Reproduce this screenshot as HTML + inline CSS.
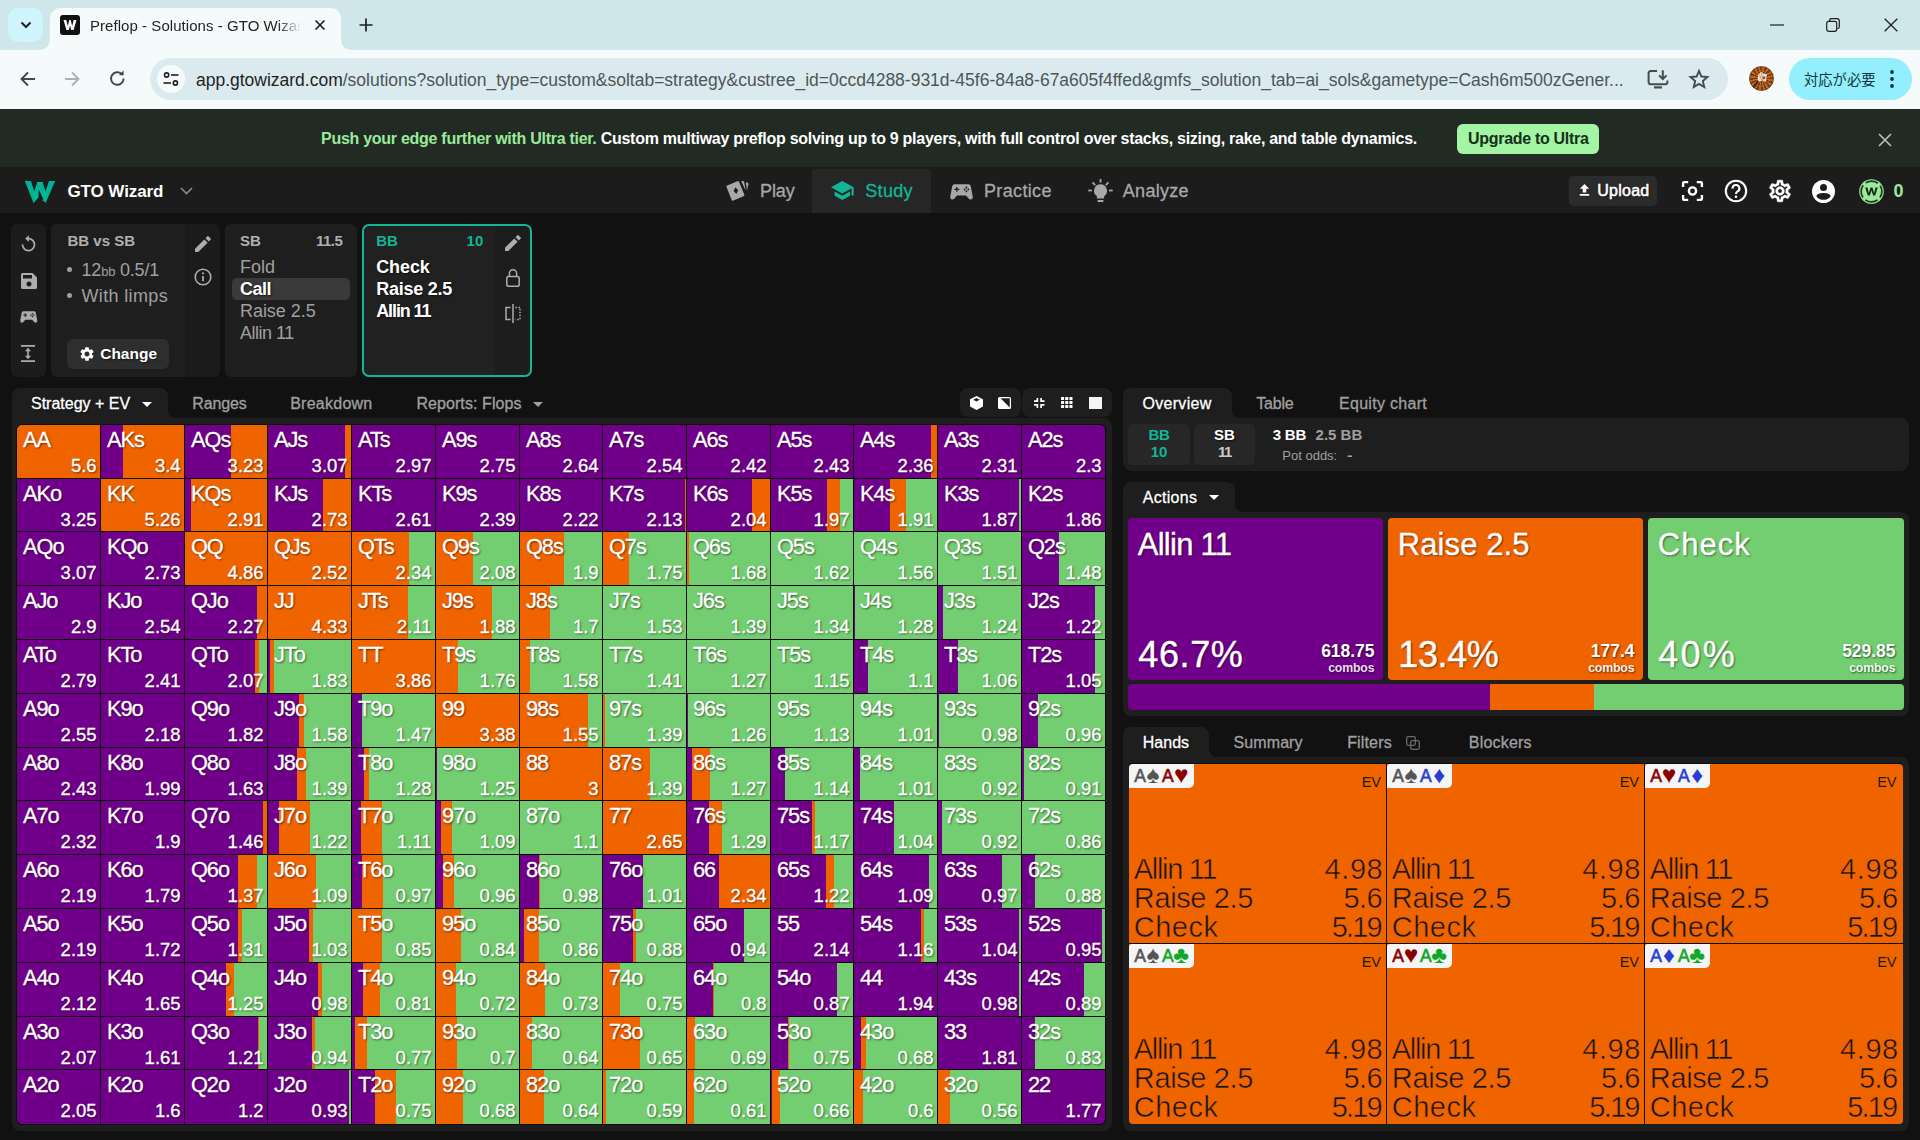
<!DOCTYPE html>
<html lang="en"><head><meta charset="utf-8"><title>Preflop - Solutions - GTO Wizard</title>
<style>

*{box-sizing:border-box;margin:0;padding:0}
html,body{width:1920px;height:1140px;overflow:hidden;background:#111;font-family:"Liberation Sans","Noto Sans CJK JP",sans-serif;color:#fff}
body{position:relative}
.abs{position:absolute}
.t{position:absolute;white-space:nowrap;line-height:1}
svg{position:absolute;overflow:visible}
/* matrix */
#mxbg{position:absolute;left:16px;top:424px;width:1090px;height:701px;background:#0a0a0a;border-radius:6px}
.c{position:absolute;color:#fff;text-shadow:1px 1px 2px rgba(0,0,0,.6);overflow:hidden;-webkit-text-stroke:.3px #fff}
.c b{position:absolute;left:5.900px;font-weight:400;font-size:21.800px;line-height:1;white-space:nowrap;letter-spacing:-1px}
.c i{position:absolute;right:3.400px;font-style:normal;font-size:18.500px;line-height:1;white-space:nowrap}
.c b{top:4px}
.c i{top:32px}

.hc{position:absolute;background:#f06400;color:#161616;overflow:hidden}
.tag{position:absolute;left:0;top:0;width:65px;height:24px;background:#f5f5f5;border-radius:3px 0 5px 0;white-space:nowrap}
.tag .a{position:absolute;top:4px;font-size:17.500px;line-height:1;-webkit-text-stroke:.6px currentColor}
.tag .s{position:absolute;top:0px;width:20px;text-align:center;font-size:23.500px;line-height:1}
.ev{position:absolute;right:5px;top:11px;font-size:14.500px;line-height:1;color:#1c1c1c}
.hl{position:absolute;font-size:29px;line-height:1;white-space:nowrap;-webkit-text-stroke:.5px #f06400}

</style></head>
<body>
<div class="abs" style="left:0;top:0;width:1920px;height:50px;background:#cfe7eb"></div>
<div class="abs" style="left:0;top:50px;width:1920px;height:59px;background:#f5fafb"></div>
<div class="abs" style="left:8px;top:8px;width:35px;height:34px;border-radius:10px;background:#cff4fc"></div>
<svg style="left:20px;top:20px" width="12" height="10" viewBox="0 0 12 10"><path d="M1.5 2.5 L6 7 L10.5 2.5" fill="none" stroke="#1f1f1f" stroke-width="2"/></svg>
<div class="abs" style="left:50px;top:8px;width:291px;height:42px;border-radius:10px 10px 0 0;background:#f5fafb"></div>
<svg style="left:40px;top:40px" width="10" height="10" viewBox="0 0 10 10"><path d="M0 10 H10 V0 A10 10 0 0 1 0 10Z" fill="#f5fafb"/></svg>
<svg style="left:341px;top:40px" width="10" height="10" viewBox="0 0 10 10"><path d="M10 10 H0 V0 A10 10 0 0 0 10 10Z" fill="#f5fafb"/></svg>
<div class="abs" style="left:60px;top:15px;width:20px;height:20px;border-radius:3px;background:#111"></div>
<svg style="left:63px;top:19px" width="14" height="12" viewBox="0 0 14 12"><path d="M0.5 1 H3.3 L4.8 7 L6.3 1 H7.7 L9.2 7 L10.7 1 H13.5 L10.6 11 H8.2 L7 6.6 L5.8 11 H3.4Z" fill="#fff"/></svg>
<div class="t" style="left:90px;top:15.500px;font-size:15px;line-height:20px;color:#1f1f1f;width:212px;overflow:hidden;letter-spacing:.05px;-webkit-mask-image:linear-gradient(90deg,#000 0,#000 188px,transparent 211px);mask-image:linear-gradient(90deg,#000 0,#000 188px,transparent 211px)">Preflop - Solutions - GTO Wizar</div>
<svg style="left:314px;top:19px" width="12" height="12" viewBox="0 0 12 12"><path d="M1.5 1.5 L10.5 10.5 M10.5 1.5 L1.5 10.5" stroke="#1f1f1f" stroke-width="1.7" fill="none"/></svg>
<svg style="left:359px;top:18px" width="14" height="14" viewBox="0 0 14 14"><path d="M7 0.5 V13.5 M0.5 7 H13.5" stroke="#1f1f1f" stroke-width="1.7" fill="none"/></svg>
<svg style="left:1770px;top:24px" width="14" height="2" viewBox="0 0 14 2"><path d="M0 1 H14" stroke="#1f1f1f" stroke-width="1.2"/></svg>
<svg style="left:1826px;top:18px" width="14" height="14" viewBox="0 0 14 14"><rect x="0.7" y="3.3" width="10" height="10" rx="2" fill="none" stroke="#1f1f1f" stroke-width="1.2"/><path d="M3.5 3 V2.5 A1.8 1.8 0 0 1 5.3 0.7 H11 A2.3 2.3 0 0 1 13.3 3 V8.7 A1.8 1.8 0 0 1 11.5 10.5 H11" fill="none" stroke="#1f1f1f" stroke-width="1.2"/></svg>
<svg style="left:1884px;top:18px" width="14" height="14" viewBox="0 0 14 14"><path d="M0.7 0.7 L13.3 13.3 M13.3 0.7 L0.7 13.3" stroke="#1f1f1f" stroke-width="1.3" fill="none"/></svg>
<svg style="left:20px;top:71px" width="16" height="16" viewBox="0 0 16 16"><path d="M15 8 H2 M8 1.5 L1.5 8 L8 14.5" stroke="#3c4a4d" stroke-width="1.9" fill="none"/></svg>
<svg style="left:64px;top:71px" width="16" height="16" viewBox="0 0 16 16"><path d="M1 8 H14 M8 1.5 L14.5 8 L8 14.5" stroke="#a9b3b5" stroke-width="1.9" fill="none"/></svg>
<svg style="left:109px;top:70px" width="17" height="17" viewBox="0 0 17 17"><path d="M14.6 8.5 A6.3 6.3 0 1 1 12.6 3.9" stroke="#3c4a4d" stroke-width="1.9" fill="none"/><path d="M9.8 5.2 H14.6 V0.6 Z" fill="#3c4a4d"/></svg>
<div class="abs" style="left:150px;top:58px;width:1578px;height:42px;border-radius:21px;background:#dbeaee"></div>
<div class="abs" style="left:157px;top:65px;width:28px;height:28px;border-radius:14px;background:#f5fafb"></div>
<svg style="left:163px;top:72px" width="16" height="14" viewBox="0 0 16 14"><circle cx="3.6" cy="3" r="2.1" fill="none" stroke="#1f1f1f" stroke-width="1.6"/><path d="M8 3 H15.5" stroke="#1f1f1f" stroke-width="1.6"/><circle cx="12.4" cy="11" r="2.1" fill="none" stroke="#1f1f1f" stroke-width="1.6"/><path d="M0.5 11 H8" stroke="#1f1f1f" stroke-width="1.6"/></svg>
<div class="t" style="left:196px;top:68px;font-size:17.500px;line-height:24px;color:#4d5659;letter-spacing:-.01px" id="url"><span style="color:#1f1f1f">app.gtowizard.com</span>/solutions?solution_type=custom&amp;soltab=strategy&amp;custree_id=0ccd4288-931d-45f6-84a8-67a605f4ffed&amp;gmfs_solution_tab=ai_sols&amp;gametype=Cash6m500zGener...</div>
<svg style="left:1647px;top:69px" width="22" height="20" viewBox="0 0 22 20"><path d="M10 2.100 H3.600 A2 2 0 0 0 1.600 4.100 V13.300 A2 2 0 0 0 3.600 15.300 H18.400 A2 2 0 0 0 20.400 13.300 V11.600" fill="none" stroke="#474b4d" stroke-width="2"/><path d="M7 18.400 H15" stroke="#474b4d" stroke-width="2.200"/><path d="M15.800 1.200 V9.800 M12.100 6.400 L15.800 10.100 L19.500 6.400" fill="none" stroke="#474b4d" stroke-width="2"/></svg>
<svg style="left:1688px;top:68px" width="22" height="22" viewBox="0 0 24 24"><path d="M12 3.200 L14.600 9.300 L21.200 9.900 L16.200 14.300 L17.700 20.700 L12 17.300 L6.300 20.700 L7.800 14.300 L2.800 9.900 L9.400 9.300Z" fill="none" stroke="#474b4d" stroke-width="2.100" stroke-linejoin="miter"/></svg>
<div class="abs" style="left:1749px;top:66px;width:25px;height:25px;border-radius:13px;background:repeating-conic-gradient(from 5deg,#b86a28 0 11deg,#7c3c12 11deg 22.500deg);border:1.500px solid #7c3c12"></div>
<svg style="left:1749px;top:66px" width="25" height="25" viewBox="0 0 26 26"><path d="M3.500 21.500 L9 14.500 L10.500 16 L6 23Z" fill="#5a2a0c"/><path d="M9.500 9.300 L12.600 6 L15.200 8 L18.600 8.400 L17.600 16.200 L13 15.600 L10.600 16.400 L8.800 14.500Z" fill="#f1dcc6"/><path d="M15.600 10.500 L17 12.300 L15.600 14.100 L14.200 12.300Z" fill="#8a2a10"/><path d="M11 9.500 L13.500 15.500 M13 7 L14.500 15.500" stroke="#a8663a" stroke-width=".6" fill="none"/></svg>
<div class="abs" style="left:1789px;top:58px;width:123px;height:42px;border-radius:21px;background:#93eefd"></div>
<div class="t" style="left:1804px;top:70px;font-size:14.3px;line-height:20px;color:#12353c;letter-spacing:0px" id="jp">対応が必要</div>
<svg style="left:1890px;top:69px" width="4" height="20" viewBox="0 0 4 20"><circle cx="2" cy="3" r="1.9" fill="#12353c"/><circle cx="2" cy="10" r="1.9" fill="#12353c"/><circle cx="2" cy="17" r="1.9" fill="#12353c"/></svg>
<div class="abs" style="left:0;top:109px;width:1920px;height:58px;background:#212a23"></div>
<div class="t" id="ban" style="left:321px;top:129px;font-size:16px;line-height:20px;font-weight:700;color:#fff;letter-spacing:-.275px"><span style="color:#9aea9a">Push your edge further with Ultra tier.</span> Custom multiway preflop solving up to 9 players, with full control over stacks, sizing, rake, and table dynamics.</div>
<div class="abs" style="left:1457px;top:124px;width:142px;height:30px;border-radius:6px;background:#a3f4a3"></div>
<div class="t" id="upg" style="left:1468px;top:129px;font-size:16px;line-height:20px;font-weight:700;color:#14301a;letter-spacing:-.3px">Upgrade to Ultra</div>
<svg style="left:1878px;top:133px" width="14" height="14" viewBox="0 0 14 14"><path d="M1 1 L13 13 M13 1 L1 13" stroke="#b9bdb9" stroke-width="1.7" fill="none"/></svg>
<div class="abs" style="left:0;top:167px;width:1920px;height:46px;background:#1c1c1c"></div>
<svg style="left:20px;top:175px" width="40" height="33" viewBox="0 0 40 33"><path d="M4.78 5.79 L11.14 6.22 L14.18 16.21 L17.37 6.95 L22.58 6.95 L25.47 16.21 L28.94 5.93 L35.17 5.93 L25.47 28.22 L24.17 26.19 L22.00 25.33 L23.30 24.31 L18.81 14.47 L18.52 22.29 L13.60 28.22Z" fill="#00b594"/></svg>
<div class="t" style="top:183px;font-size:17px;color:#fff;font-weight:700;left:67.50px;letter-spacing:-.1px;">GTO Wizard</div>
<svg style="left:180px;top:187px" width="13" height="8" viewBox="0 0 13 8"><path d="M1 1 L6.5 6.5 L12 1" stroke="#8a8a8a" stroke-width="1.6" fill="none"/></svg>
<div class="abs" style="left:812px;top:169px;width:119px;height:44px;background:#262626"></div>
<svg style="left:726px;top:180px" width="24" height="22" viewBox="0 0 24 22"><g fill="#a8a8a8"><path d="M1.2 5.6 L11.4 1.2 Q12.6 0.7 13.1 1.9 L18.3 14.6 Q18.8 15.8 17.6 16.3 L7.4 20.6 Q6.2 21.1 5.7 19.9 L0.6 7.2 Q0.1 6 1.2 5.6Z M9.5 7.2 L7.6 11 L10.4 13.9 L12.1 10.3Z" fill-rule="evenodd"/><path d="M15.2 1.2 L17 1.1 Q18 1.1 18.2 2 L19.6 10.6Z"/><path d="M19.8 2.2 L21.6 2.8 Q22.6 3.2 22.4 4.2 L21 10.4Z"/></g></svg>
<div class="t" style="top:182px;font-size:18px;color:#a8a8a8;left:760.00px;-webkit-text-stroke:.3px currentColor;letter-spacing:-.1px;">Play</div>
<svg style="left:831px;top:181px" width="24" height="20" viewBox="0 0 24 20"><g fill="#12b697"><path d="M11.3 0 L0 6.2 L11.3 12.4 L20.6 7.3 V14.4 H22.7 V6.2Z"/><path d="M3.6 10.5 V14.7 L11.3 19 L19 14.7 V10.5 L11.3 14.8Z"/></g></svg>
<div class="t" style="top:182px;font-size:18px;color:#12b697;left:865.20px;-webkit-text-stroke:.3px currentColor;letter-spacing:.35px;">Study</div>
<svg style="left:950px;top:184px" width="23" height="16" viewBox="0 0 23 16"><path d="M4.6 0.3 H18.4 Q20.3 0.3 20.8 2.2 L22.7 12.4 Q23 15.2 20.6 15.4 Q19.4 15.4 18.6 14.4 L16 11.4 H7 L4.4 14.4 Q3.6 15.4 2.4 15.4 Q0 15.2 0.3 12.4 L2.2 2.2 Q2.7 0.3 4.6 0.3Z M6.2 2.9 V4.7 H4.4 V6 H6.2 V7.8 H7.5 V6 H9.3 V4.7 H7.5 V2.9Z M16.4 2.6 A0.9 0.9 0 1 0 16.41 2.6Z M16.4 6.3 A0.9 0.9 0 1 0 16.41 6.3Z M14.5 4.45 A0.9 0.9 0 1 0 14.51 4.45Z M18.3 4.45 A0.9 0.9 0 1 0 18.31 4.45Z" fill="#a8a8a8" fill-rule="evenodd"/></svg>
<div class="t" style="top:182px;font-size:18px;color:#a8a8a8;left:984.00px;-webkit-text-stroke:.3px currentColor;letter-spacing:.35px;">Practice</div>
<svg style="left:1088px;top:179px" width="25" height="25" viewBox="0 0 25 25"><g fill="#a8a8a8"><path d="M12.5 5.3 A6.5 6.5 0 0 0 8.9 17.2 V19.6 H16.1 V17.2 A6.5 6.5 0 0 0 12.5 5.3Z"/><rect x="9.6" y="21" width="5.8" height="1.9" rx=".5"/><rect x="11.6" y="0" width="1.8" height="3.6"/><rect x="0.3" y="10.6" width="3.7" height="1.8"/><rect x="21" y="10.6" width="3.7" height="1.8"/><path d="M3.9 4.1 L5.2 2.8 L7.8 5.4 L6.5 6.7Z"/><path d="M21.1 4.1 L19.8 2.8 L17.2 5.4 L18.5 6.7Z"/></g></svg>
<div class="t" style="top:182px;font-size:18px;color:#a8a8a8;left:1122.80px;-webkit-text-stroke:.3px currentColor;letter-spacing:.3px;">Analyze</div>
<div class="abs" style="left:1569px;top:176px;width:88px;height:30px;border-radius:5px;background:#2b2b2b"></div>
<svg style="left:1579px;top:184px" width="11" height="12" viewBox="0 0 11 12"><path d="M5.5 0 L10.2 4.8 H7.3 V8.4 H3.7 V4.8 H0.8Z M0.8 10 H10.2 V11.8 H0.8Z" fill="#fff"/></svg>
<div class="t" style="top:183px;font-size:16px;color:#fff;left:1597.30px;letter-spacing:.25px;-webkit-text-stroke:.55px #fff;text-shadow:1px 1px 2px rgba(0,0,0,.6);">Upload</div>
<svg style="left:1682px;top:181px" width="21" height="20" viewBox="0 0 21 20"><g fill="none" stroke="#fff" stroke-width="2.400"><path d="M1.1 6 V2.3 Q1.1 1.1 2.3 1.1 H6.2 M14.8 1.1 H18.7 Q19.9 1.1 19.9 2.3 V6 M19.9 14 V17.7 Q19.9 18.9 18.7 18.9 H14.8 M6.2 18.9 H2.3 Q1.1 18.9 1.1 17.7 V14"/><circle cx="10.5" cy="10" r="3.6"/></g></svg>
<svg style="left:1724px;top:179px" width="24" height="24" viewBox="0 0 24 24"><circle cx="12" cy="12" r="10.2" fill="none" stroke="#fff" stroke-width="2.1"/><path d="M8.6 9.6 A3.4 3.4 0 1 1 13.6 12.4 Q12 13.3 12 15" fill="none" stroke="#fff" stroke-width="2.1"/><circle cx="12" cy="17.8" r="1.3" fill="#fff"/></svg>
<svg style="left:1766.500px;top:178px" width="26" height="26" viewBox="0 0 24 24"><path d="M19.43 12.98c.04-.32.07-.64.07-.98 0-.34-.03-.66-.07-.98l2.11-1.65c.19-.15.24-.42.12-.64l-2-3.46a.5.5 0 0 0-.61-.22l-2.49 1c-.52-.4-1.08-.73-1.69-.98l-.38-2.65A.488.488 0 0 0 14 2h-4c-.25 0-.46.18-.49.42l-.38 2.65c-.61.25-1.17.59-1.69.98l-2.49-1a.5.5 0 0 0-.61.22l-2 3.46c-.13.22-.07.49.12.64l2.11 1.65c-.04.32-.07.65-.07.98 0 .33.03.66.07.98l-2.11 1.65c-.19.15-.24.42-.12.64l2 3.46c.12.22.39.3.61.22l2.49-1c.52.4 1.08.73 1.69.98l.38 2.65c.03.24.24.42.49.42h4c.25 0 .46-.18.49-.42l.38-2.65c.61-.25 1.17-.59 1.69-.98l2.49 1c.23.09.49 0 .61-.22l2-3.46c.12-.22.07-.49-.12-.64l-2.11-1.65zm-1.98-1.71c.04.31.05.52.05.73 0 .21-.02.43-.05.73l-.14 1.13.89.7 1.08.84-.7 1.21-1.27-.51-1.04-.42-.9.68c-.43.32-.84.56-1.25.73l-1.06.43-.16 1.13-.2 1.35h-1.4l-.19-1.35-.16-1.13-1.06-.43c-.43-.18-.83-.41-1.23-.71l-.91-.7-1.06.43-1.27.51-.7-1.21 1.08-.84.89-.7-.14-1.13c-.03-.31-.05-.54-.05-.74s.02-.43.05-.73l.14-1.13-.89-.7-1.08-.84.7-1.21 1.27.51 1.04.42.9-.68c.43-.32.84-.56 1.25-.73l1.06-.43.16-1.13.2-1.35h1.39l.19 1.35.16 1.13 1.06.43c.43.18.83.41 1.23.71l.91.7 1.06-.43 1.27-.51.7 1.21-1.07.85-.89.7.14 1.13zM12 8c-2.21 0-4 1.790-4 4s1.790 4 4 4 4-1.790 4-4-1.790-4-4-4zm0 6c-1.100 0-2-.9-2-2s.9-2 2-2 2 .9 2 2-.9 2-2 2z" fill="#fff" stroke="#fff" stroke-width=".5"/></svg>
<svg style="left:1812px;top:180px" width="23" height="23" viewBox="0 0 23 23"><circle cx="11.5" cy="11.5" r="11.5" fill="#fff"/><circle cx="11.5" cy="7.6" r="3.5" fill="#1c1c1c"/><path d="M4.4 16.4 Q4.4 12.9 11.5 12.9 Q18.6 12.9 18.6 16.4 Q16 19.8 11.5 19.8 Q7 19.8 4.4 16.4Z" fill="#1c1c1c"/></svg>
<svg style="left:1859px;top:179px" width="25" height="25" viewBox="0 0 25 25"><circle cx="12.5" cy="12.5" r="12.3" fill="#9aea9a"/><circle cx="12.5" cy="12.5" r="10.4" fill="none" stroke="#1f3a22" stroke-width="1.700" stroke-dasharray="13 3.340" stroke-dashoffset="6.500"/><path d="M6.2 8.6 H8.5 L9.9 13.9 L11.5 8.6 H13.5 L15.1 13.9 L16.5 8.6 H18.8 L16.2 16.6 H14.2 L12.5 11.5 L10.8 16.6 H8.8Z" fill="#1a2b1c"/></svg>
<div class="t" style="top:182px;font-size:18px;color:#9aea9a;font-weight:700;left:1893.50px;">0</div>
<div class="abs" style="left:11px;top:224px;width:35px;height:153px;border-radius:6px;background:#1c1c1c"></div>
<svg style="left:21px;top:235px" width="15" height="17" viewBox="0 0 15 17"><path d="M7.5 3.6 A6 6 0 1 1 1.5 9.6" fill="none" stroke="#adadad" stroke-width="1.7" transform="rotate(0)"/><path d="M7.9 0.2 V7 L4.2 3.6Z" fill="#adadad"/></svg>
<svg style="left:21px;top:273px" width="16" height="16" viewBox="0 0 16 16"><path d="M1.6 0 H11.6 L16 4.4 V14.4 Q16 16 14.4 16 H1.6 Q0 16 0 14.4 V1.6 Q0 0 1.6 0Z M2 2 V5.6 H11 V2Z M8 8.4 A2.6 2.6 0 1 0 8.01 8.4Z" fill="#adadad" fill-rule="evenodd"/></svg>
<svg style="left:20px;top:311px" width="17.500" height="12.200" viewBox="0 0 23 16"><path d="M4.6 0.3 H18.4 Q20.3 0.3 20.8 2.2 L22.7 12.4 Q23 15.2 20.6 15.4 Q19.4 15.4 18.6 14.4 L16 11.4 H7 L4.400 14.4 Q3.6 15.4 2.4 15.4 Q0 15.2 0.3 12.4 L2.2 2.2 Q2.7 0.3 4.6 0.3Z M6.2 2.9 V4.7 H4.4 V6 H6.2 V7.800 H7.5 V6 H9.3 V4.7 H7.5 V2.9Z M16.4 2.6 A0.9 0.9 0 1 0 16.41 2.6Z M16.4 6.3 A0.9 0.9 0 1 0 16.41 6.3Z M14.5 4.45 A0.9 0.9 0 1 0 14.51 4.45Z M18.3 4.45 A0.9 0.9 0 1 0 18.31 4.45Z" fill="#adadad" fill-rule="evenodd"/></svg>
<svg style="left:21px;top:345px" width="14" height="17" viewBox="0 0 14 17"><path d="M0 0.9 H14 M0 16.1 H14 M7 4 V13" stroke="#adadad" stroke-width="1.6" fill="none"/><path d="M7 2.8 L10 6.2 H4Z M7 14.2 L10 10.8 H4Z" fill="#adadad"/></svg>
<div class="abs" style="left:51px;top:224px;width:169px;height:153px;border-radius:6px;background:linear-gradient(90deg,#1e1e1e 0 134px,#1b1b1b 134px)"></div>
<div class="t" style="top:233px;font-size:15px;color:#b0b0b0;font-weight:700;left:67.50px;">BB vs SB</div>
<div class="abs" style="left:67px;top:267px;width:5px;height:5px;border-radius:3px;background:#a0a0a0"></div>
<div class="t" style="left:81.5px;top:261px;font-size:18px;color:#a0a0a0;letter-spacing:-.2px">12<span style="font-size:13px">bb</span> 0.5/1</div>
<div class="abs" style="left:67px;top:293px;width:5px;height:5px;border-radius:3px;background:#a0a0a0"></div>
<div class="t" style="top:287px;font-size:18px;color:#a0a0a0;left:81.50px;letter-spacing:.35px;">With limps</div>
<div class="abs" style="left:67px;top:339px;width:102px;height:30px;border-radius:6px;background:#2e2e2e"></div>
<svg style="left:80px;top:347px" width="14" height="14" viewBox="0 0 24 24"><path d="M19.14 12.94c.04-.3.06-.61.06-.94 0-.32-.02-.64-.07-.94l2.030-1.580a.49.49 0 0 0 .12-.61l-1.920-3.320a.488.488 0 0 0-.59-.22l-2.390.96c-.5-.38-1.030-.7-1.620-.94l-.36-2.540a.484.484 0 0 0-.48-.41h-3.840c-.24 0-.43.17-.47.41l-.36 2.540c-.59.24-1.130.57-1.620.94l-2.390-.96c-.22-.08-.47 0-.59.22L2.740 8.870c-.12.21-.08.47.12.61l2.030 1.580c-.05.3-.09.63-.09.94s.02.64.07.94l-2.030 1.580a.49.49 0 0 0-.12.61l1.920 3.320c.12.22.37.29.59.22l2.390-.96c.5.38 1.030.7 1.620.94l.36 2.540c.05.24.24.41.48.41h3.840c.24 0 .44-.17.470-.41l.36-2.540c.59-.24 1.130-.56 1.620-.94l2.390.96c.22.08.47 0 .59-.22l1.920-3.320c.12-.22.07-.47-.12-.61l-2.010-1.580zM12 15.600c-1.980 0-3.600-1.620-3.600-3.600s1.620-3.600 3.600-3.600 3.600 1.620 3.600 3.600-1.620 3.600-3.600 3.600z" fill="#fff" transform="translate(-2.400 -2.400) scale(1.200)"/></svg>
<div class="t" style="top:346px;font-size:15.5px;color:#fff;font-weight:700;left:100.20px;text-shadow:1px 1px 2px rgba(0,0,0,.6);">Change</div>
<svg style="left:195px;top:235.5px" width="16" height="16" viewBox="0 0 16 16"><path d="M0 12.700 V16 H3.3 L12.6 6.7 L9.3 3.4Z M15.7 3.6 Q16.200 3.100 15.7 2.600 L13.400 0.3 Q12.900 -0.200 12.400 0.3 L10.500 2.200 L13.800 5.500Z" fill="#adadad"/></svg>
<svg style="left:194px;top:268px" width="18" height="18" viewBox="0 0 18 18"><circle cx="9" cy="9" r="7.800" fill="none" stroke="#adadad" stroke-width="1.600"/><path d="M9 8 V13.200" stroke="#adadad" stroke-width="1.800"/><circle cx="9" cy="5.300" r="1.100" fill="#adadad"/></svg>
<div class="abs" style="left:225px;top:224px;width:132px;height:153px;border-radius:6px;background:#1e1e1e"></div>
<div class="t" style="top:233px;font-size:15px;color:#b0b0b0;font-weight:700;left:240.00px;">SB</div>
<div class="t" style="top:233px;font-size:15px;color:#b0b0b0;font-weight:700;right:1577.70px;letter-spacing:-.5px;">11.5</div>
<div class="t" style="top:258px;font-size:18px;color:#a0a0a0;left:240.00px;">Fold</div>
<div class="abs" style="left:232px;top:278px;width:118px;height:22px;border-radius:5px;background:#3a3a3a"></div>
<div class="t" style="top:280px;font-size:18px;color:#fff;font-weight:700;left:240.00px;letter-spacing:-.5px;text-shadow:1px 1px 2px rgba(0,0,0,.6);">Call</div>
<div class="t" style="top:302px;font-size:18px;color:#a0a0a0;left:240.00px;letter-spacing:-.05px;">Raise 2.5</div>
<div class="t" style="top:324px;font-size:18px;color:#a0a0a0;left:240.00px;letter-spacing:-.5px;">Allin 11</div>
<div class="abs" style="left:362px;top:224px;width:170px;height:153px;border-radius:7px;border:2px solid #12b697;background:linear-gradient(90deg,#212121 0 131px,#1d1d1d 131px)"></div>
<div class="t" style="top:233px;font-size:15px;color:#12b697;font-weight:700;left:376.20px;">BB</div>
<div class="t" style="top:233px;font-size:15px;color:#12b697;font-weight:700;right:1436.50px;letter-spacing:.2px;">10</div>
<div class="t" style="top:258px;font-size:18px;color:#fff;font-weight:700;left:376.20px;letter-spacing:-.1px;text-shadow:1px 1px 2px rgba(0,0,0,.6);">Check</div>
<div class="t" style="top:280px;font-size:18px;color:#fff;font-weight:700;left:376.20px;letter-spacing:-.25px;text-shadow:1px 1px 2px rgba(0,0,0,.6);">Raise 2.5</div>
<div class="t" style="top:302px;font-size:18px;color:#fff;font-weight:700;left:376.20px;letter-spacing:-1.1px;text-shadow:1px 1px 2px rgba(0,0,0,.6);">Allin 11</div>
<svg style="left:505px;top:234.5px" width="16" height="16" viewBox="0 0 16 16"><path d="M0 12.700 V16 H3.3 L12.6 6.7 L9.3 3.4Z M15.7 3.6 Q16.200 3.100 15.7 2.600 L13.400 0.3 Q12.900 -0.200 12.400 0.3 L10.500 2.200 L13.800 5.500Z" fill="#adadad"/></svg>
<svg style="left:506px;top:269px" width="14" height="18" viewBox="0 0 14 18"><rect x="0.8" y="7.600" width="12.400" height="9.600" rx="1.800" fill="none" stroke="#adadad" stroke-width="1.500"/><path d="M3.400 7.600 V4.300 A3.600 3.600 0 0 1 10.600 4.300 V7.600" fill="none" stroke="#adadad" stroke-width="1.500"/></svg>
<svg style="left:505px;top:304px" width="16" height="19" viewBox="0 0 16 19"><path d="M5.600 3.400 H1 V15.600 H5.600" fill="none" stroke="#adadad" stroke-width="1.500"/><path d="M8 0 V19" stroke="#adadad" stroke-width="1.500"/><path d="M10.400 3.400 H15 V15.600 H10.400" fill="none" stroke="#adadad" stroke-width="1.500" stroke-dasharray="1.500 1.500"/></svg>
<div class="abs" style="left:11.5px;top:388px;width:156.5px;height:30px;border-radius:8px 8px 0 0;background:#1e1e1e"></div><svg style="left:168.0px;top:410px" width="8" height="8" viewBox="0 0 8 8"><path d="M0 0 A8 8 0 0 0 8 8 H0Z" fill="#1e1e1e"/></svg>
<div class="abs" style="left:11.500px;top:418px;width:1100.500px;height:713px;background:#1e1e1e;border-radius:0 8px 8px 8px"></div>
<div id="mxbg"></div>
<div class="t" style="top:396px;font-size:16px;color:#fff;left:31.00px;text-shadow:1px 1px 2px rgba(0,0,0,.6);-webkit-text-stroke:.3px currentColor;letter-spacing:0px;">Strategy + EV</div>
<svg style="left:142px;top:401.500px" width="10" height="5" viewBox="0 0 10 5"><path d="M0 0 H10 L5 5Z" fill="#fff"/></svg>
<div class="t" style="top:396px;font-size:16px;color:#a0a0a0;left:192.20px;-webkit-text-stroke:.3px currentColor;letter-spacing:-.1px;">Ranges</div>
<div class="t" style="top:396px;font-size:16px;color:#a0a0a0;left:290.20px;-webkit-text-stroke:.3px currentColor;letter-spacing:.25px;">Breakdown</div>
<div class="t" style="top:396px;font-size:16px;color:#a0a0a0;left:416.40px;-webkit-text-stroke:.3px currentColor;letter-spacing:.08px;">Reports: Flops</div>
<svg style="left:533px;top:401.500px" width="10" height="5" viewBox="0 0 10 5"><path d="M0 0 H10 L5 5Z" fill="#a0a0a0"/></svg>
<div class="abs" style="left:960px;top:388px;width:61px;height:29px;border-radius:8px;background:#1e1e1e"></div>
<div class="abs" style="left:1022px;top:388px;width:90px;height:29px;border-radius:8px;background:#1e1e1e"></div>
<svg style="left:969.500px;top:395.500px" width="13" height="14" viewBox="0 0 13 14"><path d="M6.500 0 L13 3.300 V10.500 L6.500 14 L0 10.500 V3.300Z M6.500 2 L3.300 3.700 L6.500 5.400 L9.700 3.700Z" fill="#fff" fill-rule="evenodd"/></svg>
<svg style="left:998px;top:396.500px" width="13" height="12" viewBox="0 0 13 12"><path d="M1.500 0 H11.500 Q13 0 13 1.500 V10.500 Q13 12 11.500 12 H1.500 Q0 12 0 10.500 V1.500 Q0 0 1.500 0Z M2.600 1.200 H11.800 V10.400Z" fill="#fff" fill-rule="evenodd"/></svg>
<svg style="left:1033.500px;top:397.500px" width="10.500" height="10" viewBox="0 0 10.500 10"><path d="M0 3.200 H3.400 V0 M7.100 0 V3.200 H10.500 M10.500 6.800 H7.100 V10 M3.400 10 V6.800 H0" fill="none" stroke="#fff" stroke-width="1.700"/></svg>
<svg style="left:1061px;top:397px" width="11.500" height="11" viewBox="0 0 11.500 11"><g fill="#fff"><rect x="0" y="0" width="3.100" height="3" rx=".6"/><rect x="4.200" y="0" width="3.100" height="3" rx=".6"/><rect x="8.400" y="0" width="3.100" height="3" rx=".6"/><rect x="0" y="4" width="3.100" height="3" rx=".6"/><rect x="4.200" y="4" width="3.100" height="3" rx=".6"/><rect x="8.400" y="4" width="3.100" height="3" rx=".6"/><rect x="0" y="8" width="3.100" height="3" rx=".6"/><rect x="4.200" y="8" width="3.100" height="3" rx=".6"/><rect x="8.400" y="8" width="3.100" height="3" rx=".6"/></g></svg>
<div class="abs" style="left:1089px;top:396.500px;width:13px;height:12px;background:#f4f4f4"></div>
<div id="mx">
<div class="c r53" style="left:17px;top:425px;width:83px;height:53px;background:#f06400;border-top-left-radius:5px;"><b>AA</b><i>5.6</i></div>
<div class="c r53" style="left:101px;top:425px;width:83px;height:53px;background:linear-gradient(90deg,#70008a 0 22px,#f06400 22px 83px);"><b>AKs</b><i>3.4</i></div>
<div class="c r53" style="left:185px;top:425px;width:82px;height:53px;background:linear-gradient(90deg,#70008a 0 46px,#f06400 46px 82px);"><b>AQs</b><i>3.23</i></div>
<div class="c r53" style="left:268px;top:425px;width:83px;height:53px;background:linear-gradient(90deg,#70008a 0 77px,#f06400 77px 83px);"><b>AJs</b><i>3.07</i></div>
<div class="c r53" style="left:352px;top:425px;width:83px;height:53px;background:#70008a;"><b>ATs</b><i>2.97</i></div>
<div class="c r53" style="left:436px;top:425px;width:83px;height:53px;background:#70008a;"><b>A9s</b><i>2.75</i></div>
<div class="c r53" style="left:520px;top:425px;width:82px;height:53px;background:#70008a;"><b>A8s</b><i>2.64</i></div>
<div class="c r53" style="left:603px;top:425px;width:83px;height:53px;background:#70008a;"><b>A7s</b><i>2.54</i></div>
<div class="c r53" style="left:687px;top:425px;width:83px;height:53px;background:#70008a;"><b>A6s</b><i>2.42</i></div>
<div class="c r53" style="left:771px;top:425px;width:82px;height:53px;background:#70008a;"><b>A5s</b><i>2.43</i></div>
<div class="c r53" style="left:854px;top:425px;width:83px;height:53px;background:linear-gradient(90deg,#70008a 0 77px,#f06400 77px 83px);"><b>A4s</b><i>2.36</i></div>
<div class="c r53" style="left:938px;top:425px;width:83px;height:53px;background:#70008a;"><b>A3s</b><i>2.31</i></div>
<div class="c r53" style="left:1022px;top:425px;width:83px;height:53px;background:#70008a;border-top-right-radius:5px;"><b>A2s</b><i>2.3</i></div>
<div class="c r52" style="left:17px;top:479px;width:83px;height:52px;background:#70008a;"><b>AKo</b><i>3.25</i></div>
<div class="c r52" style="left:101px;top:479px;width:83px;height:52px;background:#f06400;"><b>KK</b><i>5.26</i></div>
<div class="c r52" style="left:185px;top:479px;width:82px;height:52px;background:linear-gradient(90deg,#70008a 0 6px,#f06400 6px 82px);"><b>KQs</b><i>2.91</i></div>
<div class="c r52" style="left:268px;top:479px;width:83px;height:52px;background:linear-gradient(90deg,#70008a 0 55px,#f06400 55px 83px);"><b>KJs</b><i>2.73</i></div>
<div class="c r52" style="left:352px;top:479px;width:83px;height:52px;background:#70008a;"><b>KTs</b><i>2.61</i></div>
<div class="c r52" style="left:436px;top:479px;width:83px;height:52px;background:#70008a;"><b>K9s</b><i>2.39</i></div>
<div class="c r52" style="left:520px;top:479px;width:82px;height:52px;background:#70008a;"><b>K8s</b><i>2.22</i></div>
<div class="c r52" style="left:603px;top:479px;width:83px;height:52px;background:linear-gradient(90deg,#70008a 0 82px,#f06400 82px 83px);"><b>K7s</b><i>2.13</i></div>
<div class="c r52" style="left:687px;top:479px;width:83px;height:52px;background:linear-gradient(90deg,#70008a 0 65px,#f06400 65px 83px);"><b>K6s</b><i>2.04</i></div>
<div class="c r52" style="left:771px;top:479px;width:82px;height:52px;background:linear-gradient(90deg,#70008a 0 56px,#f06400 56px 69px,#72ce70 69px 82px);"><b>K5s</b><i>1.97</i></div>
<div class="c r52" style="left:854px;top:479px;width:83px;height:52px;background:linear-gradient(90deg,#70008a 0 36px,#f06400 36px 52px,#72ce70 52px 83px);"><b>K4s</b><i>1.91</i></div>
<div class="c r52" style="left:938px;top:479px;width:83px;height:52px;background:linear-gradient(90deg,#70008a 0 81px,#72ce70 81px 83px);"><b>K3s</b><i>1.87</i></div>
<div class="c r52" style="left:1022px;top:479px;width:83px;height:52px;background:#70008a;"><b>K2s</b><i>1.86</i></div>
<div class="c r53" style="left:17px;top:532px;width:83px;height:53px;background:#70008a;"><b>AQo</b><i>3.07</i></div>
<div class="c r53" style="left:101px;top:532px;width:83px;height:53px;background:#70008a;"><b>KQo</b><i>2.73</i></div>
<div class="c r53" style="left:185px;top:532px;width:82px;height:53px;background:#f06400;"><b>QQ</b><i>4.86</i></div>
<div class="c r53" style="left:268px;top:532px;width:83px;height:53px;background:#f06400;"><b>QJs</b><i>2.52</i></div>
<div class="c r53" style="left:352px;top:532px;width:83px;height:53px;background:linear-gradient(90deg,#f06400 0px 57px,#72ce70 57px 83px);"><b>QTs</b><i>2.34</i></div>
<div class="c r53" style="left:436px;top:532px;width:83px;height:53px;background:linear-gradient(90deg,#f06400 0px 37px,#72ce70 37px 83px);"><b>Q9s</b><i>2.08</i></div>
<div class="c r53" style="left:520px;top:532px;width:82px;height:53px;background:linear-gradient(90deg,#f06400 0px 44px,#72ce70 44px 82px);"><b>Q8s</b><i>1.9</i></div>
<div class="c r53" style="left:603px;top:532px;width:83px;height:53px;background:linear-gradient(90deg,#f06400 0px 26px,#72ce70 26px 83px);"><b>Q7s</b><i>1.75</i></div>
<div class="c r53" style="left:687px;top:532px;width:83px;height:53px;background:linear-gradient(90deg,#f06400 0px 2px,#72ce70 2px 83px);"><b>Q6s</b><i>1.68</i></div>
<div class="c r53" style="left:771px;top:532px;width:82px;height:53px;background:#72ce70;"><b>Q5s</b><i>1.62</i></div>
<div class="c r53" style="left:854px;top:532px;width:83px;height:53px;background:#72ce70;"><b>Q4s</b><i>1.56</i></div>
<div class="c r53" style="left:938px;top:532px;width:83px;height:53px;background:#72ce70;"><b>Q3s</b><i>1.51</i></div>
<div class="c r53" style="left:1022px;top:532px;width:83px;height:53px;background:linear-gradient(90deg,#70008a 0 37px,#72ce70 37px 83px);"><b>Q2s</b><i>1.48</i></div>
<div class="c r53" style="left:17px;top:586px;width:83px;height:53px;background:#70008a;"><b>AJo</b><i>2.9</i></div>
<div class="c r53" style="left:101px;top:586px;width:83px;height:53px;background:#70008a;"><b>KJo</b><i>2.54</i></div>
<div class="c r53" style="left:185px;top:586px;width:82px;height:53px;background:linear-gradient(90deg,#70008a 0 72px,#f06400 72px 82px);"><b>QJo</b><i>2.27</i></div>
<div class="c r53" style="left:268px;top:586px;width:83px;height:53px;background:#f06400;"><b>JJ</b><i>4.33</i></div>
<div class="c r53" style="left:352px;top:586px;width:83px;height:53px;background:linear-gradient(90deg,#f06400 0px 56px,#72ce70 56px 83px);"><b>JTs</b><i>2.11</i></div>
<div class="c r53" style="left:436px;top:586px;width:83px;height:53px;background:linear-gradient(90deg,#f06400 0px 56px,#72ce70 56px 83px);"><b>J9s</b><i>1.88</i></div>
<div class="c r53" style="left:520px;top:586px;width:82px;height:53px;background:linear-gradient(90deg,#f06400 0px 30px,#72ce70 30px 82px);"><b>J8s</b><i>1.7</i></div>
<div class="c r53" style="left:603px;top:586px;width:83px;height:53px;background:#72ce70;"><b>J7s</b><i>1.53</i></div>
<div class="c r53" style="left:687px;top:586px;width:83px;height:53px;background:#72ce70;"><b>J6s</b><i>1.39</i></div>
<div class="c r53" style="left:771px;top:586px;width:82px;height:53px;background:#72ce70;"><b>J5s</b><i>1.34</i></div>
<div class="c r53" style="left:854px;top:586px;width:83px;height:53px;background:linear-gradient(90deg,#70008a 0 1px,#72ce70 1px 83px);"><b>J4s</b><i>1.28</i></div>
<div class="c r53" style="left:938px;top:586px;width:83px;height:53px;background:linear-gradient(90deg,#70008a 0 5px,#72ce70 5px 83px);"><b>J3s</b><i>1.24</i></div>
<div class="c r53" style="left:1022px;top:586px;width:83px;height:53px;background:linear-gradient(90deg,#70008a 0 73px,#72ce70 73px 83px);"><b>J2s</b><i>1.22</i></div>
<div class="c r53" style="left:17px;top:640px;width:83px;height:53px;background:#70008a;"><b>ATo</b><i>2.79</i></div>
<div class="c r53" style="left:101px;top:640px;width:83px;height:53px;background:#70008a;"><b>KTo</b><i>2.41</i></div>
<div class="c r53" style="left:185px;top:640px;width:82px;height:53px;background:linear-gradient(90deg,#70008a 0 70px,#f06400 70px 74px,#72ce70 74px 82px);"><b>QTo</b><i>2.07</i></div>
<div class="c r53" style="left:268px;top:640px;width:83px;height:53px;background:linear-gradient(90deg,#70008a 0 2px,#f06400 2px 6px,#72ce70 6px 83px);"><b>JTo</b><i>1.83</i></div>
<div class="c r53" style="left:352px;top:640px;width:83px;height:53px;background:#f06400;"><b>TT</b><i>3.86</i></div>
<div class="c r53" style="left:436px;top:640px;width:83px;height:53px;background:linear-gradient(90deg,#f06400 0px 22px,#72ce70 22px 83px);"><b>T9s</b><i>1.76</i></div>
<div class="c r53" style="left:520px;top:640px;width:82px;height:53px;background:linear-gradient(90deg,#f06400 0px 10px,#72ce70 10px 82px);"><b>T8s</b><i>1.58</i></div>
<div class="c r53" style="left:603px;top:640px;width:83px;height:53px;background:#72ce70;"><b>T7s</b><i>1.41</i></div>
<div class="c r53" style="left:687px;top:640px;width:83px;height:53px;background:#72ce70;"><b>T6s</b><i>1.27</i></div>
<div class="c r53" style="left:771px;top:640px;width:82px;height:53px;background:#72ce70;"><b>T5s</b><i>1.15</i></div>
<div class="c r53" style="left:854px;top:640px;width:83px;height:53px;background:linear-gradient(90deg,#70008a 0 14px,#72ce70 14px 83px);"><b>T4s</b><i>1.1</i></div>
<div class="c r53" style="left:938px;top:640px;width:83px;height:53px;background:linear-gradient(90deg,#70008a 0 20px,#72ce70 20px 83px);"><b>T3s</b><i>1.06</i></div>
<div class="c r53" style="left:1022px;top:640px;width:83px;height:53px;background:linear-gradient(90deg,#70008a 0 73px,#72ce70 73px 83px);"><b>T2s</b><i>1.05</i></div>
<div class="c r53" style="left:17px;top:694px;width:83px;height:53px;background:#70008a;"><b>A9o</b><i>2.55</i></div>
<div class="c r53" style="left:101px;top:694px;width:83px;height:53px;background:#70008a;"><b>K9o</b><i>2.18</i></div>
<div class="c r53" style="left:185px;top:694px;width:82px;height:53px;background:#70008a;"><b>Q9o</b><i>1.82</i></div>
<div class="c r53" style="left:268px;top:694px;width:83px;height:53px;background:linear-gradient(90deg,#70008a 0 31px,#f06400 31px 36px,#72ce70 36px 83px);"><b>J9o</b><i>1.58</i></div>
<div class="c r53" style="left:352px;top:694px;width:83px;height:53px;background:linear-gradient(90deg,#70008a 0 10px,#72ce70 10px 83px);"><b>T9o</b><i>1.47</i></div>
<div class="c r53" style="left:436px;top:694px;width:83px;height:53px;background:#f06400;"><b>99</b><i>3.38</i></div>
<div class="c r53" style="left:520px;top:694px;width:82px;height:53px;background:linear-gradient(90deg,#f06400 0px 68px,#72ce70 68px 82px);"><b>98s</b><i>1.55</i></div>
<div class="c r53" style="left:603px;top:694px;width:83px;height:53px;background:linear-gradient(90deg,#f06400 0px 2px,#72ce70 2px 83px);"><b>97s</b><i>1.39</i></div>
<div class="c r53" style="left:687px;top:694px;width:83px;height:53px;background:linear-gradient(90deg,#70008a 0 1px,#72ce70 1px 83px);"><b>96s</b><i>1.26</i></div>
<div class="c r53" style="left:771px;top:694px;width:82px;height:53px;background:#72ce70;"><b>95s</b><i>1.13</i></div>
<div class="c r53" style="left:854px;top:694px;width:83px;height:53px;background:#72ce70;"><b>94s</b><i>1.01</i></div>
<div class="c r53" style="left:938px;top:694px;width:83px;height:53px;background:linear-gradient(90deg,#70008a 0 1px,#72ce70 1px 83px);"><b>93s</b><i>0.98</i></div>
<div class="c r53" style="left:1022px;top:694px;width:83px;height:53px;background:linear-gradient(90deg,#70008a 0 16px,#72ce70 16px 83px);"><b>92s</b><i>0.96</i></div>
<div class="c r52" style="left:17px;top:748px;width:83px;height:52px;background:#70008a;"><b>A8o</b><i>2.43</i></div>
<div class="c r52" style="left:101px;top:748px;width:83px;height:52px;background:#70008a;"><b>K8o</b><i>1.99</i></div>
<div class="c r52" style="left:185px;top:748px;width:82px;height:52px;background:#70008a;"><b>Q8o</b><i>1.63</i></div>
<div class="c r52" style="left:268px;top:748px;width:83px;height:52px;background:linear-gradient(90deg,#70008a 0 29px,#f06400 29px 38px,#72ce70 38px 83px);"><b>J8o</b><i>1.39</i></div>
<div class="c r52" style="left:352px;top:748px;width:83px;height:52px;background:linear-gradient(90deg,#70008a 0 12px,#f06400 12px 17px,#72ce70 17px 83px);"><b>T8o</b><i>1.28</i></div>
<div class="c r52" style="left:436px;top:748px;width:83px;height:52px;background:linear-gradient(90deg,#70008a 0 1px,#72ce70 1px 83px);"><b>98o</b><i>1.25</i></div>
<div class="c r52" style="left:520px;top:748px;width:82px;height:52px;background:#f06400;"><b>88</b><i>3</i></div>
<div class="c r52" style="left:603px;top:748px;width:83px;height:52px;background:linear-gradient(90deg,#f06400 0px 47px,#72ce70 47px 83px);"><b>87s</b><i>1.39</i></div>
<div class="c r52" style="left:687px;top:748px;width:83px;height:52px;background:linear-gradient(90deg,#70008a 0 5px,#f06400 5px 23px,#72ce70 23px 83px);"><b>86s</b><i>1.27</i></div>
<div class="c r52" style="left:771px;top:748px;width:82px;height:52px;background:linear-gradient(90deg,#70008a 0 14px,#72ce70 14px 82px);"><b>85s</b><i>1.14</i></div>
<div class="c r52" style="left:854px;top:748px;width:83px;height:52px;background:linear-gradient(90deg,#70008a 0 6px,#72ce70 6px 83px);"><b>84s</b><i>1.01</i></div>
<div class="c r52" style="left:938px;top:748px;width:83px;height:52px;background:#72ce70;"><b>83s</b><i>0.92</i></div>
<div class="c r52" style="left:1022px;top:748px;width:83px;height:52px;background:linear-gradient(90deg,#70008a 0 2px,#72ce70 2px 83px);"><b>82s</b><i>0.91</i></div>
<div class="c r53" style="left:17px;top:801px;width:83px;height:53px;background:#70008a;"><b>A7o</b><i>2.32</i></div>
<div class="c r53" style="left:101px;top:801px;width:83px;height:53px;background:#70008a;"><b>K7o</b><i>1.9</i></div>
<div class="c r53" style="left:185px;top:801px;width:82px;height:53px;background:linear-gradient(90deg,#70008a 0 78px,#f06400 78px 82px);"><b>Q7o</b><i>1.46</i></div>
<div class="c r53" style="left:268px;top:801px;width:83px;height:53px;background:linear-gradient(90deg,#70008a 0 11px,#f06400 11px 42px,#72ce70 42px 83px);"><b>J7o</b><i>1.22</i></div>
<div class="c r53" style="left:352px;top:801px;width:83px;height:53px;background:linear-gradient(90deg,#70008a 0 9px,#f06400 9px 30px,#72ce70 30px 83px);"><b>T7o</b><i>1.11</i></div>
<div class="c r53" style="left:436px;top:801px;width:83px;height:53px;background:linear-gradient(90deg,#70008a 0 5px,#f06400 5px 16px,#72ce70 16px 83px);"><b>97o</b><i>1.09</i></div>
<div class="c r53" style="left:520px;top:801px;width:82px;height:53px;background:#72ce70;"><b>87o</b><i>1.1</i></div>
<div class="c r53" style="left:603px;top:801px;width:83px;height:53px;background:#f06400;"><b>77</b><i>2.65</i></div>
<div class="c r53" style="left:687px;top:801px;width:83px;height:53px;background:linear-gradient(90deg,#70008a 0 22px,#f06400 22px 35px,#72ce70 35px 83px);"><b>76s</b><i>1.29</i></div>
<div class="c r53" style="left:771px;top:801px;width:82px;height:53px;background:linear-gradient(90deg,#70008a 0 41px,#f06400 41px 44px,#72ce70 44px 82px);"><b>75s</b><i>1.17</i></div>
<div class="c r53" style="left:854px;top:801px;width:83px;height:53px;background:linear-gradient(90deg,#70008a 0 40px,#72ce70 40px 83px);"><b>74s</b><i>1.04</i></div>
<div class="c r53" style="left:938px;top:801px;width:83px;height:53px;background:linear-gradient(90deg,#70008a 0 4px,#72ce70 4px 83px);"><b>73s</b><i>0.92</i></div>
<div class="c r53" style="left:1022px;top:801px;width:83px;height:53px;background:#72ce70;"><b>72s</b><i>0.86</i></div>
<div class="c r53" style="left:17px;top:855px;width:83px;height:53px;background:#70008a;"><b>A6o</b><i>2.19</i></div>
<div class="c r53" style="left:101px;top:855px;width:83px;height:53px;background:#70008a;"><b>K6o</b><i>1.79</i></div>
<div class="c r53" style="left:185px;top:855px;width:82px;height:53px;background:linear-gradient(90deg,#70008a 0 53px,#f06400 53px 72px,#72ce70 72px 82px);"><b>Q6o</b><i>1.37</i></div>
<div class="c r53" style="left:268px;top:855px;width:83px;height:53px;background:linear-gradient(90deg,#f06400 0px 48px,#72ce70 48px 83px);"><b>J6o</b><i>1.09</i></div>
<div class="c r53" style="left:352px;top:855px;width:83px;height:53px;background:linear-gradient(90deg,#70008a 0 10px,#f06400 10px 31px,#72ce70 31px 83px);"><b>T6o</b><i>0.97</i></div>
<div class="c r53" style="left:436px;top:855px;width:83px;height:53px;background:linear-gradient(90deg,#70008a 0 7px,#f06400 7px 18px,#72ce70 18px 83px);"><b>96o</b><i>0.96</i></div>
<div class="c r53" style="left:520px;top:855px;width:82px;height:53px;background:linear-gradient(90deg,#70008a 0 19px,#f06400 19px 20px,#72ce70 20px 82px);"><b>86o</b><i>0.98</i></div>
<div class="c r53" style="left:603px;top:855px;width:83px;height:53px;background:linear-gradient(90deg,#70008a 0 40px,#72ce70 40px 83px);"><b>76o</b><i>1.01</i></div>
<div class="c r53" style="left:687px;top:855px;width:83px;height:53px;background:linear-gradient(90deg,#70008a 0 32px,#f06400 32px 83px);"><b>66</b><i>2.34</i></div>
<div class="c r53" style="left:771px;top:855px;width:82px;height:53px;background:linear-gradient(90deg,#70008a 0 55px,#f06400 55px 63px,#72ce70 63px 82px);"><b>65s</b><i>1.22</i></div>
<div class="c r53" style="left:854px;top:855px;width:83px;height:53px;background:linear-gradient(90deg,#70008a 0 75px,#72ce70 75px 83px);"><b>64s</b><i>1.09</i></div>
<div class="c r53" style="left:938px;top:855px;width:83px;height:53px;background:linear-gradient(90deg,#70008a 0 64px,#72ce70 64px 83px);"><b>63s</b><i>0.97</i></div>
<div class="c r53" style="left:1022px;top:855px;width:83px;height:53px;background:linear-gradient(90deg,#70008a 0 13px,#72ce70 13px 83px);"><b>62s</b><i>0.88</i></div>
<div class="c r53" style="left:17px;top:909px;width:83px;height:53px;background:#70008a;"><b>A5o</b><i>2.19</i></div>
<div class="c r53" style="left:101px;top:909px;width:83px;height:53px;background:#70008a;"><b>K5o</b><i>1.72</i></div>
<div class="c r53" style="left:185px;top:909px;width:82px;height:53px;background:linear-gradient(90deg,#70008a 0 53px,#f06400 53px 57px,#72ce70 57px 82px);"><b>Q5o</b><i>1.31</i></div>
<div class="c r53" style="left:268px;top:909px;width:83px;height:53px;background:linear-gradient(90deg,#70008a 0 41px,#f06400 41px 45px,#72ce70 45px 83px);"><b>J5o</b><i>1.03</i></div>
<div class="c r53" style="left:352px;top:909px;width:83px;height:53px;background:linear-gradient(90deg,#f06400 0px 30px,#72ce70 30px 83px);"><b>T5o</b><i>0.85</i></div>
<div class="c r53" style="left:436px;top:909px;width:83px;height:53px;background:linear-gradient(90deg,#f06400 0px 25px,#72ce70 25px 83px);"><b>95o</b><i>0.84</i></div>
<div class="c r53" style="left:520px;top:909px;width:82px;height:53px;background:linear-gradient(90deg,#70008a 0 4px,#f06400 4px 19px,#72ce70 19px 82px);"><b>85o</b><i>0.86</i></div>
<div class="c r53" style="left:603px;top:909px;width:83px;height:53px;background:linear-gradient(90deg,#70008a 0 30px,#f06400 30px 33px,#72ce70 33px 83px);"><b>75o</b><i>0.88</i></div>
<div class="c r53" style="left:687px;top:909px;width:83px;height:53px;background:linear-gradient(90deg,#70008a 0 57px,#72ce70 57px 83px);"><b>65o</b><i>0.94</i></div>
<div class="c r53" style="left:771px;top:909px;width:82px;height:53px;background:#70008a;"><b>55</b><i>2.14</i></div>
<div class="c r53" style="left:854px;top:909px;width:83px;height:53px;background:linear-gradient(90deg,#70008a 0 67px,#f06400 67px 70px,#72ce70 70px 83px);"><b>54s</b><i>1.16</i></div>
<div class="c r53" style="left:938px;top:909px;width:83px;height:53px;background:linear-gradient(90deg,#70008a 0 81px,#72ce70 81px 83px);"><b>53s</b><i>1.04</i></div>
<div class="c r53" style="left:1022px;top:909px;width:83px;height:53px;background:linear-gradient(90deg,#70008a 0 80px,#72ce70 80px 83px);"><b>52s</b><i>0.95</i></div>
<div class="c r53" style="left:17px;top:963px;width:83px;height:53px;background:#70008a;"><b>A4o</b><i>2.12</i></div>
<div class="c r53" style="left:101px;top:963px;width:83px;height:53px;background:#70008a;"><b>K4o</b><i>1.65</i></div>
<div class="c r53" style="left:185px;top:963px;width:82px;height:53px;background:linear-gradient(90deg,#70008a 0 41px,#f06400 41px 49px,#72ce70 49px 82px);"><b>Q4o</b><i>1.25</i></div>
<div class="c r53" style="left:268px;top:963px;width:83px;height:53px;background:linear-gradient(90deg,#70008a 0 50px,#f06400 50px 54px,#72ce70 54px 83px);"><b>J4o</b><i>0.98</i></div>
<div class="c r53" style="left:352px;top:963px;width:83px;height:53px;background:linear-gradient(90deg,#70008a 0 11px,#f06400 11px 28px,#72ce70 28px 83px);"><b>T4o</b><i>0.81</i></div>
<div class="c r53" style="left:436px;top:963px;width:83px;height:53px;background:linear-gradient(90deg,#f06400 0px 20px,#72ce70 20px 83px);"><b>94o</b><i>0.72</i></div>
<div class="c r53" style="left:520px;top:963px;width:82px;height:53px;background:linear-gradient(90deg,#f06400 0px 25px,#72ce70 25px 82px);"><b>84o</b><i>0.73</i></div>
<div class="c r53" style="left:603px;top:963px;width:83px;height:53px;background:linear-gradient(90deg,#f06400 0px 17px,#72ce70 17px 83px);"><b>74o</b><i>0.75</i></div>
<div class="c r53" style="left:687px;top:963px;width:83px;height:53px;background:linear-gradient(90deg,#70008a 0 26px,#f06400 26px 27px,#72ce70 27px 83px);"><b>64o</b><i>0.8</i></div>
<div class="c r53" style="left:771px;top:963px;width:82px;height:53px;background:linear-gradient(90deg,#70008a 0 66px,#72ce70 66px 82px);"><b>54o</b><i>0.87</i></div>
<div class="c r53" style="left:854px;top:963px;width:83px;height:53px;background:#70008a;"><b>44</b><i>1.94</i></div>
<div class="c r53" style="left:938px;top:963px;width:83px;height:53px;background:linear-gradient(90deg,#70008a 0 81px,#72ce70 81px 83px);"><b>43s</b><i>0.98</i></div>
<div class="c r53" style="left:1022px;top:963px;width:83px;height:53px;background:linear-gradient(90deg,#70008a 0 62px,#72ce70 62px 83px);"><b>42s</b><i>0.89</i></div>
<div class="c r52" style="left:17px;top:1017px;width:83px;height:52px;background:#70008a;"><b>A3o</b><i>2.07</i></div>
<div class="c r52" style="left:101px;top:1017px;width:83px;height:52px;background:#70008a;"><b>K3o</b><i>1.61</i></div>
<div class="c r52" style="left:185px;top:1017px;width:82px;height:52px;background:linear-gradient(90deg,#70008a 0 73px,#f06400 73px 74px,#72ce70 74px 82px);"><b>Q3o</b><i>1.21</i></div>
<div class="c r52" style="left:268px;top:1017px;width:83px;height:52px;background:linear-gradient(90deg,#70008a 0 44px,#f06400 44px 47px,#72ce70 47px 83px);"><b>J3o</b><i>0.94</i></div>
<div class="c r52" style="left:352px;top:1017px;width:83px;height:52px;background:linear-gradient(90deg,#70008a 0 3px,#f06400 3px 15px,#72ce70 15px 83px);"><b>T3o</b><i>0.77</i></div>
<div class="c r52" style="left:436px;top:1017px;width:83px;height:52px;background:linear-gradient(90deg,#f06400 0px 21px,#72ce70 21px 83px);"><b>93o</b><i>0.7</i></div>
<div class="c r52" style="left:520px;top:1017px;width:82px;height:52px;background:linear-gradient(90deg,#f06400 0px 12px,#72ce70 12px 82px);"><b>83o</b><i>0.64</i></div>
<div class="c r52" style="left:603px;top:1017px;width:83px;height:52px;background:linear-gradient(90deg,#f06400 0px 37px,#72ce70 37px 83px);"><b>73o</b><i>0.65</i></div>
<div class="c r52" style="left:687px;top:1017px;width:83px;height:52px;background:linear-gradient(90deg,#f06400 0px 8px,#72ce70 8px 83px);"><b>63o</b><i>0.69</i></div>
<div class="c r52" style="left:771px;top:1017px;width:82px;height:52px;background:linear-gradient(90deg,#70008a 0 17px,#f06400 17px 18px,#72ce70 18px 82px);"><b>53o</b><i>0.75</i></div>
<div class="c r52" style="left:854px;top:1017px;width:83px;height:52px;background:linear-gradient(90deg,#70008a 0 7px,#f06400 7px 12px,#72ce70 12px 83px);"><b>43o</b><i>0.68</i></div>
<div class="c r52" style="left:938px;top:1017px;width:83px;height:52px;background:#70008a;"><b>33</b><i>1.81</i></div>
<div class="c r52" style="left:1022px;top:1017px;width:83px;height:52px;background:linear-gradient(90deg,#70008a 0 13px,#72ce70 13px 83px);"><b>32s</b><i>0.83</i></div>
<div class="c r54" style="left:17px;top:1070px;width:83px;height:54px;background:#70008a;border-bottom-left-radius:5px;"><b>A2o</b><i>2.05</i></div>
<div class="c r54" style="left:101px;top:1070px;width:83px;height:54px;background:#70008a;"><b>K2o</b><i>1.6</i></div>
<div class="c r54" style="left:185px;top:1070px;width:82px;height:54px;background:#70008a;"><b>Q2o</b><i>1.2</i></div>
<div class="c r54" style="left:268px;top:1070px;width:83px;height:54px;background:linear-gradient(90deg,#70008a 0 81px,#72ce70 81px 83px);"><b>J2o</b><i>0.93</i></div>
<div class="c r54" style="left:352px;top:1070px;width:83px;height:54px;background:linear-gradient(90deg,#70008a 0 23px,#f06400 23px 44px,#72ce70 44px 83px);"><b>T2o</b><i>0.75</i></div>
<div class="c r54" style="left:436px;top:1070px;width:83px;height:54px;background:linear-gradient(90deg,#f06400 0px 27px,#72ce70 27px 83px);"><b>92o</b><i>0.68</i></div>
<div class="c r54" style="left:520px;top:1070px;width:82px;height:54px;background:linear-gradient(90deg,#f06400 0px 24px,#72ce70 24px 82px);"><b>82o</b><i>0.64</i></div>
<div class="c r54" style="left:603px;top:1070px;width:83px;height:54px;background:linear-gradient(90deg,#f06400 0px 3px,#72ce70 3px 83px);"><b>72o</b><i>0.59</i></div>
<div class="c r54" style="left:687px;top:1070px;width:83px;height:54px;background:linear-gradient(90deg,#f06400 0px 7px,#72ce70 7px 83px);"><b>62o</b><i>0.61</i></div>
<div class="c r54" style="left:771px;top:1070px;width:82px;height:54px;background:linear-gradient(90deg,#70008a 0 1px,#f06400 1px 9px,#72ce70 9px 82px);"><b>52o</b><i>0.66</i></div>
<div class="c r54" style="left:854px;top:1070px;width:83px;height:54px;background:linear-gradient(90deg,#f06400 0px 9px,#72ce70 9px 83px);"><b>42o</b><i>0.6</i></div>
<div class="c r54" style="left:938px;top:1070px;width:83px;height:54px;background:linear-gradient(90deg,#f06400 0px 12px,#72ce70 12px 83px);"><b>32o</b><i>0.56</i></div>
<div class="c r54" style="left:1022px;top:1070px;width:83px;height:54px;background:#70008a;border-bottom-right-radius:5px;"><b>22</b><i>1.77</i></div>
</div>
<div class="abs" style="left:1123px;top:388px;width:109px;height:30px;border-radius:8px 8px 0 0;background:#1e1e1e"></div><svg style="left:1232px;top:410px" width="8" height="8" viewBox="0 0 8 8"><path d="M0 0 A8 8 0 0 0 8 8 H0Z" fill="#1e1e1e"/></svg>
<div class="abs" style="left:1123px;top:418px;width:786px;height:53px;background:#1e1e1e;border-radius:0 8px 8px 8px"></div>
<div class="t" style="top:396px;font-size:16px;color:#fff;left:1142.50px;text-shadow:1px 1px 2px rgba(0,0,0,.6);-webkit-text-stroke:.3px currentColor;letter-spacing:.3px;">Overview</div>
<div class="t" style="top:396px;font-size:16px;color:#a0a0a0;left:1256.30px;-webkit-text-stroke:.3px currentColor;letter-spacing:-.2px;">Table</div>
<div class="t" style="top:396px;font-size:16px;color:#a0a0a0;left:1339.00px;-webkit-text-stroke:.3px currentColor;letter-spacing:.3px;">Equity chart</div>
<div class="abs" style="left:1128px;top:424px;width:62px;height:41px;border-radius:5px;background:#272727"></div>
<div class="abs" style="left:1194px;top:424px;width:61px;height:41px;border-radius:5px;background:#272727"></div>
<div class="t" style="left:1128px;width:62px;text-align:center;top:427px;font-size:15px;font-weight:700;color:#12b697;letter-spacing:-.4px">BB</div>
<div class="t" style="left:1128px;width:62px;text-align:center;top:444px;font-size:15px;font-weight:700;color:#12b697">10</div>
<div class="t" style="left:1194px;width:61px;text-align:center;top:427px;font-size:15px;font-weight:700;color:#fff;text-shadow:1px 1px 2px rgba(0,0,0,.6);">SB</div>
<div class="t" style="left:1194px;width:61px;text-align:center;top:444px;font-size:15px;font-weight:700;color:#c8c8c8;letter-spacing:-1.5px">11</div>
<div class="t" style="top:427px;font-size:15px;color:#fff;font-weight:700;left:1272.70px;letter-spacing:-.2px;">3 BB</div>
<div class="t" style="top:427px;font-size:15px;color:#a0a0a0;font-weight:700;left:1315.60px;">2.5 BB</div>
<div class="t" style="top:449px;font-size:13px;color:#a0a0a0;left:1282.30px;">Pot odds:</div>
<div class="t" style="top:449px;font-size:13px;color:#a0a0a0;font-weight:700;left:1347.00px;transform:scaleX(1.300);transform-origin:left;">-</div>
<div class="abs" style="left:1123px;top:482px;width:112px;height:30px;border-radius:8px 8px 0 0;background:#1e1e1e"></div><svg style="left:1235px;top:504px" width="8" height="8" viewBox="0 0 8 8"><path d="M0 0 A8 8 0 0 0 8 8 H0Z" fill="#1e1e1e"/></svg>
<div class="abs" style="left:1123px;top:512px;width:786px;height:204px;background:#1e1e1e;border-radius:0 8px 8px 8px"></div>
<div class="t" style="top:490px;font-size:16px;color:#fff;left:1142.70px;text-shadow:1px 1px 2px rgba(0,0,0,.6);-webkit-text-stroke:.3px currentColor;letter-spacing:.3px;">Actions</div>
<svg style="left:1209px;top:495px" width="10" height="5" viewBox="0 0 10 5"><path d="M0 0 H10 L5 5Z" fill="#fff"/></svg>
<div class="abs" style="left:1128px;top:518px;width:255px;height:162px;border-radius:4px;background:#70008a"></div>
<div class="t" style="top:529px;font-size:31px;color:#fff;left:1137.80px;text-shadow:1px 1px 2px rgba(0,0,0,.6);letter-spacing:-0.75px;-webkit-text-stroke:.35px #fff;">Allin 11</div>
<div class="t" style="top:637px;font-size:36px;color:#fff;left:1138.30px;text-shadow:1px 1px 2px rgba(0,0,0,.6);letter-spacing:0.6px;-webkit-text-stroke:.4px #fff;">46.7%</div>
<div class="t" style="top:643px;font-size:17.5px;color:#fff;font-weight:700;right:545.60px;text-shadow:1px 1px 2px rgba(0,0,0,.6);letter-spacing:-.05px;">618.75</div>
<div class="t" style="top:662px;font-size:12.3px;color:#eadcf0;font-weight:700;right:545.60px;text-shadow:1px 1px 2px rgba(0,0,0,.6);letter-spacing:-.15px;">combos</div>
<div class="abs" style="left:1388px;top:518px;width:255px;height:162px;border-radius:4px;background:#f06400"></div>
<div class="t" style="top:529px;font-size:31px;color:#fff;left:1397.80px;text-shadow:1px 1px 2px rgba(0,0,0,.6);letter-spacing:0.1px;-webkit-text-stroke:.35px #fff;">Raise 2.5</div>
<div class="t" style="top:637px;font-size:36px;color:#fff;left:1398.30px;text-shadow:1px 1px 2px rgba(0,0,0,.6);letter-spacing:-0.4px;-webkit-text-stroke:.4px #fff;">13.4%</div>
<div class="t" style="top:643px;font-size:17.5px;color:#fff;font-weight:700;right:285.60px;text-shadow:1px 1px 2px rgba(0,0,0,.6);letter-spacing:-.05px;">177.4</div>
<div class="t" style="top:662px;font-size:12.3px;color:#fff0e6;font-weight:700;right:285.60px;text-shadow:1px 1px 2px rgba(0,0,0,.6);letter-spacing:-.15px;">combos</div>
<div class="abs" style="left:1648px;top:518px;width:256px;height:162px;border-radius:4px;background:#72ce70"></div>
<div class="t" style="top:529px;font-size:31px;color:#fff;left:1657.80px;text-shadow:1px 1px 2px rgba(0,0,0,.6);letter-spacing:1.0px;-webkit-text-stroke:.35px #fff;">Check</div>
<div class="t" style="top:637px;font-size:36px;color:#fff;left:1658.30px;text-shadow:1px 1px 2px rgba(0,0,0,.6);letter-spacing:2.2px;-webkit-text-stroke:.4px #fff;">40%</div>
<div class="t" style="top:643px;font-size:17.5px;color:#fff;font-weight:700;right:24.60px;text-shadow:1px 1px 2px rgba(0,0,0,.6);letter-spacing:-.05px;">529.85</div>
<div class="t" style="top:662px;font-size:12.3px;color:#eefaee;font-weight:700;right:24.60px;text-shadow:1px 1px 2px rgba(0,0,0,.6);letter-spacing:-.15px;">combos</div>
<div class="abs" style="left:1128px;top:684px;width:776px;height:26px;border-radius:4px;background:linear-gradient(90deg,#70008a 0 362px,#f06400 362px 466px,#72ce70 466px)"></div>
<div class="abs" style="left:1123px;top:727px;width:86px;height:30px;border-radius:8px 8px 0 0;background:#1e1e1e"></div><svg style="left:1209px;top:749px" width="8" height="8" viewBox="0 0 8 8"><path d="M0 0 A8 8 0 0 0 8 8 H0Z" fill="#1e1e1e"/></svg>
<div class="abs" style="left:1123px;top:757px;width:786px;height:374px;background:#1e1e1e;border-radius:0 8px 8px 8px"></div>
<div class="t" style="top:735px;font-size:16px;color:#fff;left:1142.80px;text-shadow:1px 1px 2px rgba(0,0,0,.6);-webkit-text-stroke:.3px currentColor;">Hands</div>
<div class="t" style="top:735px;font-size:16px;color:#a0a0a0;left:1233.50px;-webkit-text-stroke:.3px currentColor;letter-spacing:.1px;">Summary</div>
<div class="t" style="top:735px;font-size:16px;color:#a0a0a0;left:1347.20px;-webkit-text-stroke:.3px currentColor;letter-spacing:.15px;">Filters</div>
<svg style="left:1406px;top:736px" width="14" height="14" viewBox="0 0 14 14"><rect x="0.7" y="0.7" width="8.600" height="8.600" rx="1.500" fill="none" stroke="#6a6a6a" stroke-width="1.300"/><rect x="4.700" y="4.700" width="8.600" height="8.600" rx="1.500" fill="none" stroke="#6a6a6a" stroke-width="1.300"/></svg>
<div class="t" style="top:735px;font-size:16px;color:#a0a0a0;left:1468.80px;-webkit-text-stroke:.3px currentColor;letter-spacing:.2px;">Blockers</div>
<div class="abs" style="left:1129px;top:763px;width:774px;height:361px;background:#0a0a0a;border-radius:4px"></div>
<div class="hc" style="left:1129px;top:764px;width:257px;height:179px;border-top-left-radius:4px;">
<div class="tag"><span class="a" style="left:5.300px;color:#555">A</span><span class="s" style="left:14px;color:#555;font-size:24.5px;top:-1px">♠</span><span class="a" style="left:33.100px;color:#8b0000">A</span><span class="s" style="left:42.200px;color:#8b0000;font-size:24.5px;top:-1px">♥</span></div>
<div class="ev" style="right:5px">EV</div>
<div class="hl" style="top:91px;left:4.800px;letter-spacing:-1.33px">Allin 11</div>
<div class="hl" style="top:91px;right:2.75px;letter-spacing:0.55px">4.98</div>
<div class="hl" style="top:120px;left:4.800px;letter-spacing:-0.36px">Raise 2.5</div>
<div class="hl" style="top:120px;right:3.80px;letter-spacing:-0.5px">5.6</div>
<div class="hl" style="top:149px;left:4.800px;letter-spacing:0.5px">Check</div>
<div class="hl" style="top:149px;right:5.10px;letter-spacing:-1.8px">5.19</div>
</div>
<div class="hc" style="left:1387px;top:764px;width:257px;height:179px;">
<div class="tag"><span class="a" style="left:5.300px;color:#555">A</span><span class="s" style="left:14px;color:#555;font-size:24.5px;top:-1px">♠</span><span class="a" style="left:33.100px;color:#2b3fcf">A</span><span class="s" style="left:42.200px;color:#2b3fcf;font-size:23.5px;top:0px">♦</span></div>
<div class="ev" style="right:5px">EV</div>
<div class="hl" style="top:91px;left:4.800px;letter-spacing:-1.33px">Allin 11</div>
<div class="hl" style="top:91px;right:3.05px;letter-spacing:0.55px">4.98</div>
<div class="hl" style="top:120px;left:4.800px;letter-spacing:-0.36px">Raise 2.5</div>
<div class="hl" style="top:120px;right:4.10px;letter-spacing:-0.5px">5.6</div>
<div class="hl" style="top:149px;left:4.800px;letter-spacing:0.5px">Check</div>
<div class="hl" style="top:149px;right:5.40px;letter-spacing:-1.8px">5.19</div>
</div>
<div class="hc" style="left:1645px;top:764px;width:258px;height:179px;border-top-right-radius:4px;">
<div class="tag"><span class="a" style="left:5.300px;color:#8b0000">A</span><span class="s" style="left:14px;color:#8b0000;font-size:24.5px;top:-1px">♥</span><span class="a" style="left:33.100px;color:#2b3fcf">A</span><span class="s" style="left:42.200px;color:#2b3fcf;font-size:23.5px;top:0px">♦</span></div>
<div class="ev" style="right:6.5px">EV</div>
<div class="hl" style="top:91px;left:4.800px;letter-spacing:-1.33px">Allin 11</div>
<div class="hl" style="top:91px;right:4.25px;letter-spacing:0.55px">4.98</div>
<div class="hl" style="top:120px;left:4.800px;letter-spacing:-0.36px">Raise 2.5</div>
<div class="hl" style="top:120px;right:5.30px;letter-spacing:-0.5px">5.6</div>
<div class="hl" style="top:149px;left:4.800px;letter-spacing:0.5px">Check</div>
<div class="hl" style="top:149px;right:6.60px;letter-spacing:-1.8px">5.19</div>
</div>
<div class="hc" style="left:1129px;top:944px;width:257px;height:180px;border-bottom-left-radius:4px;">
<div class="tag"><span class="a" style="left:5.300px;color:#555">A</span><span class="s" style="left:14px;color:#555;font-size:24.5px;top:-1px">♠</span><span class="a" style="left:33.100px;color:#10a828">A</span><span class="s" style="left:42.200px;color:#10a828;font-size:24px;top:-1px">♣</span></div>
<div class="ev" style="right:5px">EV</div>
<div class="hl" style="top:91px;left:4.800px;letter-spacing:-1.33px">Allin 11</div>
<div class="hl" style="top:91px;right:2.75px;letter-spacing:0.55px">4.98</div>
<div class="hl" style="top:120px;left:4.800px;letter-spacing:-0.36px">Raise 2.5</div>
<div class="hl" style="top:120px;right:3.80px;letter-spacing:-0.5px">5.6</div>
<div class="hl" style="top:149px;left:4.800px;letter-spacing:0.5px">Check</div>
<div class="hl" style="top:149px;right:5.10px;letter-spacing:-1.8px">5.19</div>
</div>
<div class="hc" style="left:1387px;top:944px;width:257px;height:180px;">
<div class="tag"><span class="a" style="left:5.300px;color:#8b0000">A</span><span class="s" style="left:14px;color:#8b0000;font-size:24.5px;top:-1px">♥</span><span class="a" style="left:33.100px;color:#10a828">A</span><span class="s" style="left:42.200px;color:#10a828;font-size:24px;top:-1px">♣</span></div>
<div class="ev" style="right:5px">EV</div>
<div class="hl" style="top:91px;left:4.800px;letter-spacing:-1.33px">Allin 11</div>
<div class="hl" style="top:91px;right:3.05px;letter-spacing:0.55px">4.98</div>
<div class="hl" style="top:120px;left:4.800px;letter-spacing:-0.36px">Raise 2.5</div>
<div class="hl" style="top:120px;right:4.10px;letter-spacing:-0.5px">5.6</div>
<div class="hl" style="top:149px;left:4.800px;letter-spacing:0.5px">Check</div>
<div class="hl" style="top:149px;right:5.40px;letter-spacing:-1.8px">5.19</div>
</div>
<div class="hc" style="left:1645px;top:944px;width:258px;height:180px;border-bottom-right-radius:4px;">
<div class="tag"><span class="a" style="left:5.300px;color:#2b3fcf">A</span><span class="s" style="left:14px;color:#2b3fcf;font-size:23.5px;top:0px">♦</span><span class="a" style="left:33.100px;color:#10a828">A</span><span class="s" style="left:42.200px;color:#10a828;font-size:24px;top:-1px">♣</span></div>
<div class="ev" style="right:6.5px">EV</div>
<div class="hl" style="top:91px;left:4.800px;letter-spacing:-1.33px">Allin 11</div>
<div class="hl" style="top:91px;right:4.25px;letter-spacing:0.55px">4.98</div>
<div class="hl" style="top:120px;left:4.800px;letter-spacing:-0.36px">Raise 2.5</div>
<div class="hl" style="top:120px;right:5.30px;letter-spacing:-0.5px">5.6</div>
<div class="hl" style="top:149px;left:4.800px;letter-spacing:0.5px">Check</div>
<div class="hl" style="top:149px;right:6.60px;letter-spacing:-1.8px">5.19</div>
</div>
</body></html>
